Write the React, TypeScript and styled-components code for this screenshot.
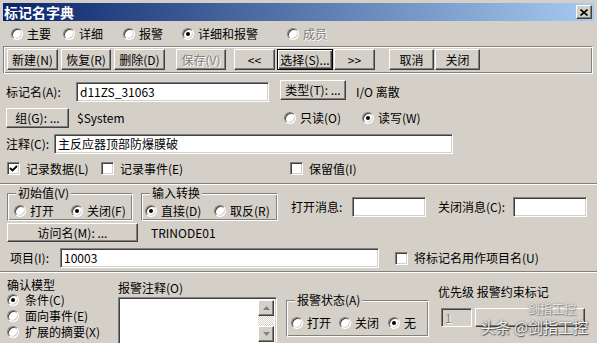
import React from 'react';
import styled, { createGlobalStyle, css } from 'styled-components';

const FACE = '#d4d0c8';
const SHADOW = '#808080';
const DARK = '#404040';

const GlobalStyle = createGlobalStyle`
	html, body {
		margin: 0;
		padding: 0;
		background: ${FACE};
	}
	* {
		box-sizing: border-box;
	}
`;

const raised = css`
	border: 1px solid;
	border-color: #fff ${DARK} ${DARK} #fff;
	box-shadow: inset -1px -1px ${SHADOW}, inset 1px 1px ${FACE};
`;

const sunken = css`
	border: 1px solid;
	border-color: ${SHADOW} #fff #fff ${SHADOW};
	box-shadow: inset 1px 1px ${DARK}, inset -1px -1px ${FACE};
`;

const etched = css`
	border: 1px solid;
	border-color: ${SHADOW} #fff #fff ${SHADOW};
	box-shadow: inset 1px 1px #fff, inset -1px -1px ${SHADOW};
`;

const disabledText = css`
	color: ${SHADOW};
	text-shadow: 1px 1px #fff;
`;

const Window = styled.div`
	position: relative;
	width: 597px;
	height: 343px;
	overflow: hidden;
	background: ${FACE};
	padding: 3px 3px 0 3px;
	font-family: 'Noto Sans CJK SC', 'Liberation Sans', sans-serif;
	font-size: 12px;
	line-height: 14px;
	color: #000;
`;

const TitleBar = styled.div`
	height: 18px;
	display: flex;
	align-items: center;
	justify-content: space-between;
	padding: 0 2px 0 1px;
	background: linear-gradient(to right, #0a246a, #a6caf0);
`;

const Title = styled.span`
	color: #fff;
	font-weight: bold;
	font-size: 14px;
	line-height: 18px;
`;

const CloseButton = styled.div`
	width: 16px;
	height: 14px;
	background: ${FACE};
	display: flex;
	align-items: center;
	justify-content: center;
	${raised};
`;

const Row = styled.div<{ $h: number; $mt: number; $pl?: number }>`
	display: flex;
	align-items: center;
	height: ${(p) => p.$h}px;
	margin-top: ${(p) => p.$mt}px;
	padding-left: ${(p) => p.$pl ?? 0}px;
	white-space: nowrap;
`;

const Label = styled.span<{ $w?: number; $ml?: number; $disabled?: boolean }>`
	display: inline-block;
	flex: none;
	width: ${(p) => (p.$w ? `${p.$w}px` : 'auto')};
	margin-left: ${(p) => p.$ml ?? 0}px;
	${(p) => p.$disabled && disabledText};
`;

const Toolbar = styled.div`
	display: flex;
	align-items: flex-start;
	width: 590px;
	height: 28px;
	margin-top: 4px;
	padding: 2px 3px 0 3px;
	${etched};
`;

const Button = styled.div<{
	$w: number;
	$h?: number;
	$ml?: number;
	$default?: boolean;
	$disabled?: boolean;
	$mt?: number;
}>`
	flex: none;
	width: ${(p) => p.$w}px;
	height: ${(p) => p.$h ?? 21}px;
	margin-left: ${(p) => p.$ml ?? 0}px;
	margin-top: ${(p) => p.$mt ?? 0}px;
	display: flex;
	align-items: center;
	justify-content: center;
	background: ${FACE};
	${(p) =>
		p.$default
			? css`
					border: 1px solid #000;
					box-shadow: inset 1px 1px #fff, inset -1px -1px ${DARK}, inset -2px -2px ${SHADOW};
			  `
			: raised};
	${(p) => p.$disabled && disabledText};
`;

const TextBox = styled.div<{ $w: number; $h?: number; $ml?: number; $mt?: number; $disabled?: boolean }>`
	flex: none;
	width: ${(p) => p.$w}px;
	height: ${(p) => p.$h ?? 20}px;
	margin-left: ${(p) => p.$ml ?? 0}px;
	margin-top: ${(p) => p.$mt ?? 0}px;
	padding: 2px 3px 0 3px;
	background: ${(p) => (p.$disabled ? FACE : '#fff')};
	${sunken};
	${(p) => p.$disabled && disabledText};
	overflow: hidden;
`;

const RadioItem = styled.label<{ $w?: number; $disabled?: boolean }>`
	display: flex;
	align-items: center;
	gap: 4px;
	flex: none;
	width: ${(p) => (p.$w ? `${p.$w}px` : 'auto')};
	${(p) => p.$disabled && disabledText};
`;

const RadioCircle = styled.span<{ $on?: boolean }>`
	position: relative;
	flex: none;
	width: 12px;
	height: 12px;
	border-radius: 50%;
	background: #fff;
	border: 1px solid;
	border-color: ${SHADOW} #fff #fff ${SHADOW};
	box-shadow: inset 1px 1px ${DARK}, inset -1px -1px ${FACE};
	text-shadow: none;
	&::after {
		content: '';
		display: ${(p) => (p.$on ? 'block' : 'none')};
		position: absolute;
		left: 3px;
		top: 3px;
		width: 4px;
		height: 4px;
		border-radius: 50%;
		background: #000;
	}
`;

const CheckItem = styled.label<{ $w?: number; $ml?: number }>`
	display: flex;
	align-items: center;
	gap: 6px;
	flex: none;
	width: ${(p) => (p.$w ? `${p.$w}px` : 'auto')};
	margin-left: ${(p) => p.$ml ?? 0}px;
`;

const CheckBox = styled.span`
	flex: none;
	width: 13px;
	height: 13px;
	background: #fff;
	display: flex;
	align-items: center;
	justify-content: center;
	${sunken};
`;

const Separator = styled.div<{ $mt: number }>`
	height: 2px;
	margin: ${(p) => p.$mt}px -3px 0 -3px;
	border-top: 1px solid ${SHADOW};
	border-bottom: 1px solid #fff;
`;

const GroupBox = styled.div<{ $w: number; $h: number; $ml?: number; $mt?: number; $pad: string }>`
	position: relative;
	flex: none;
	display: flex;
	align-items: center;
	width: ${(p) => p.$w}px;
	height: ${(p) => p.$h}px;
	margin-left: ${(p) => p.$ml ?? 0}px;
	margin-top: ${(p) => p.$mt ?? 0}px;
	padding: ${(p) => p.$pad};
	${etched};
`;

const Legend = styled.span`
	position: absolute;
	left: 8px;
	top: -8px;
	padding: 0 2px;
	background: ${FACE};
`;

const BottomPane = styled.div`
	display: flex;
	align-items: flex-start;
`;

const Column = styled.div<{ $w?: number; $ml?: number; $pt?: number }>`
	display: flex;
	flex-direction: column;
	flex: none;
	width: ${(p) => (p.$w ? `${p.$w}px` : 'auto')};
	margin-left: ${(p) => p.$ml ?? 0}px;
	padding-top: ${(p) => p.$pt ?? 0}px;
`;

const StackRadio = styled(RadioItem)`
	height: 16px;
	gap: 6px;
`;

const MemoBox = styled.div`
	display: flex;
	justify-content: flex-end;
	align-items: flex-start;
	width: 159px;
	height: 50px;
	margin-top: 2px;
	background: #fff;
	padding: 2px;
	${sunken};
`;

const ScrollBar = styled.div`
	display: flex;
	flex-direction: column;
	width: 16px;
	height: 42px;
`;

const ScrollArrow = styled.div`
	width: 16px;
	height: 16px;
	display: flex;
	align-items: center;
	justify-content: center;
	background: ${FACE};
	${raised};
`;

const ScrollTrack = styled.div`
	flex: 1;
	background-color: #fff;
	background-image: conic-gradient(${FACE} 25%, #fff 0 50%, ${FACE} 0 75%, #fff 0);
	background-size: 2px 2px;
`;

const Watermark = styled.div`
	position: absolute;
	right: 9px;
	top: 302px;
	display: flex;
	flex-direction: column;
	align-items: flex-end;
	gap: 3px;
	white-space: nowrap;
	pointer-events: none;
	color: rgba(255, 255, 255, 0.92);
	text-shadow: 0 0 2px rgba(60, 60, 60, 0.9), 1px 1px 1px rgba(60, 60, 60, 0.8);
`;

const WatermarkTop = styled.span`
	font-size: 12px;
	line-height: 13px;
	margin-right: 12px;
	opacity: 0.6;
`;

const WatermarkMain = styled.span`
	font-size: 15px;
	line-height: 17px;
`;

const Radio = ({ label, on, w, disabled }: { label: string; on?: boolean; w?: number; disabled?: boolean }) => (
	<RadioItem $w={w} $disabled={disabled}>
		<RadioCircle $on={on} />
		<span>{label}</span>
	</RadioItem>
);

const Check = ({ label, on, w, ml }: { label: string; on?: boolean; w?: number; ml?: number }) => (
	<CheckItem $w={w} $ml={ml}>
		<CheckBox>
			{on && (
				<svg width="9" height="9" viewBox="0 0 9 9">
					<path d="M1 4 L3.5 6.5 L8 2" stroke="#000" strokeWidth="1.8" fill="none" />
				</svg>
			)}
		</CheckBox>
		<span>{label}</span>
	</CheckItem>
);

const Arrow = ({ up }: { up?: boolean }) => (
	<svg width="7" height="4" viewBox="0 0 7 4">
		<path d={up ? 'M0 4 L3.5 0 L7 4 Z' : 'M0 0 L3.5 4 L7 0 Z'} fill={SHADOW} />
	</svg>
);

export default function App() {
	return (
		<Window>
			<GlobalStyle />
			<TitleBar>
				<Title>标记名字典</Title>
				<CloseButton>
					<svg width="8" height="7" viewBox="0 0 8 7">
						<path d="M0.5 0.5 L7.5 6.5 M7.5 0.5 L0.5 6.5" stroke="#000" strokeWidth="1.6" />
					</svg>
				</CloseButton>
			</TitleBar>

			<Row $h={16} $mt={5} $pl={8}>
				<Radio label="主要" w={52} />
				<Radio label="详细" w={60} />
				<Radio label="报警" w={59} />
				<Radio label="详细和报警" w={105} on />
				<Radio label="成员" disabled />
			</Row>

			<Toolbar>
				<Button $w={51}>新建(N)</Button>
				<Button $w={50} $ml={3}>恢复(R)</Button>
				<Button $w={51} $ml={3}>删除(D)</Button>
				<Button $w={50} $ml={11} $disabled>保存(V)</Button>
				<Button $w={41} $ml={8}>&lt;&lt;</Button>
				<Button $w={56} $ml={2} $default>选择(S)...</Button>
				<Button $w={41} $ml={1}>&gt;&gt;</Button>
				<Button $w={45} $ml={14}>取消</Button>
				<Button $w={45} $ml={1}>关闭</Button>
			</Toolbar>

			<Row $h={24} $mt={6} $pl={3}>
				<Label $w={70}>标记名(A):</Label>
				<TextBox $w={193}>d11ZS_31063</TextBox>
				<Button $w={66} $h={20} $ml={11} $mt={-4}>类型(T): ...</Button>
				<Label $ml={10}>I/O 离散</Label>
			</Row>

			<Row $h={20} $mt={4} $pl={3}>
				<Button $w={63} $h={20}>组(G): ...</Button>
				<Label $w={207} $ml={8}>$System</Label>
				<Radio label="只读(O)" w={78} />
				<Radio label="读写(W)" on />
			</Row>

			<Row $h={20} $mt={6} $pl={3}>
				<Label $w={48}>注释(C):</Label>
				<TextBox $w={399}>主反应器顶部防爆膜破</TextBox>
			</Row>

			<Row $h={13} $mt={8} $pl={4}>
				<Check label="记录数据(L)" on w={94} />
				<Check label="记录事件(E)" w={189} />
				<Check label="保留值(I)" />
			</Row>

			<Separator $mt={8} />

			<Row $h={28} $mt={8}>
				<GroupBox $w={126} $h={28} $ml={4} $pad="8px 0 0 6px">
					<Legend>初始值(V)</Legend>
					<Radio label="打开" w={57} />
					<Radio label="关闭(F)" on />
				</GroupBox>
				<GroupBox $w={137} $h={28} $ml={8} $pad="8px 0 0 3px">
					<Legend>输入转换</Legend>
					<Radio label="直接(D)" w={69} on />
					<Radio label="取反(R)" />
				</GroupBox>
				<Label $w={61} $ml={13}>打开消息:</Label>
				<TextBox $w={74} $h={20} />
				<Label $w={75} $ml={12}>关闭消息(C):</Label>
				<TextBox $w={74} $h={20} />
			</Row>

			<Row $h={19} $mt={2}>
				<Button $w={131} $h={19} $ml={4}>访问名(M): ...</Button>
				<Label $ml={13}>TRINODE01</Label>
			</Row>

			<Row $h={20} $mt={6} $pl={7}>
				<Label $w={50}>项目(I):</Label>
				<TextBox $w={319}>10003</TextBox>
				<Check label="将标记名用作项目名(U)" ml={16} />
			</Row>

			<Separator $mt={3} />

			<BottomPane>
				<Column $w={111} $ml={4} $pt={5}>
					<Label>确认模型</Label>
					<StackRadio>
						<RadioCircle $on />
						<span>条件(C)</span>
					</StackRadio>
					<StackRadio>
						<RadioCircle />
						<span>面向事件(E)</span>
					</StackRadio>
					<StackRadio>
						<RadioCircle />
						<span>扩展的摘要(X)</span>
					</StackRadio>
				</Column>

				<Column $w={159} $pt={8}>
					<Label>报警注释(O)</Label>
					<MemoBox>
						<ScrollBar>
							<ScrollArrow>
								<Arrow up />
							</ScrollArrow>
							<ScrollTrack />
							<ScrollArrow>
								<Arrow />
							</ScrollArrow>
						</ScrollBar>
					</MemoBox>
				</Column>

				<GroupBox $w={143} $h={37} $ml={9} $mt={27} $pad="8px 0 0 4px">
					<Legend>报警状态(A)</Legend>
					<Radio label="打开" w={48} />
					<Radio label="关闭" w={49} />
					<Radio label="无" on />
				</GroupBox>

				<Column $ml={9} $pt={12}>
					<Label>优先级 报警约束标记</Label>
					<Row $h={19} $mt={9} $pl={3}>
						<TextBox $w={31} $h={19} $disabled>
							1
						</TextBox>
						<Button $w={110} $h={19} $ml={3} />
					</Row>
				</Column>
			</BottomPane>

			<Watermark>
				<WatermarkTop>剑指工控</WatermarkTop>
				<WatermarkMain>头条 @剑指工控</WatermarkMain>
			</Watermark>
		</Window>
	);
}
